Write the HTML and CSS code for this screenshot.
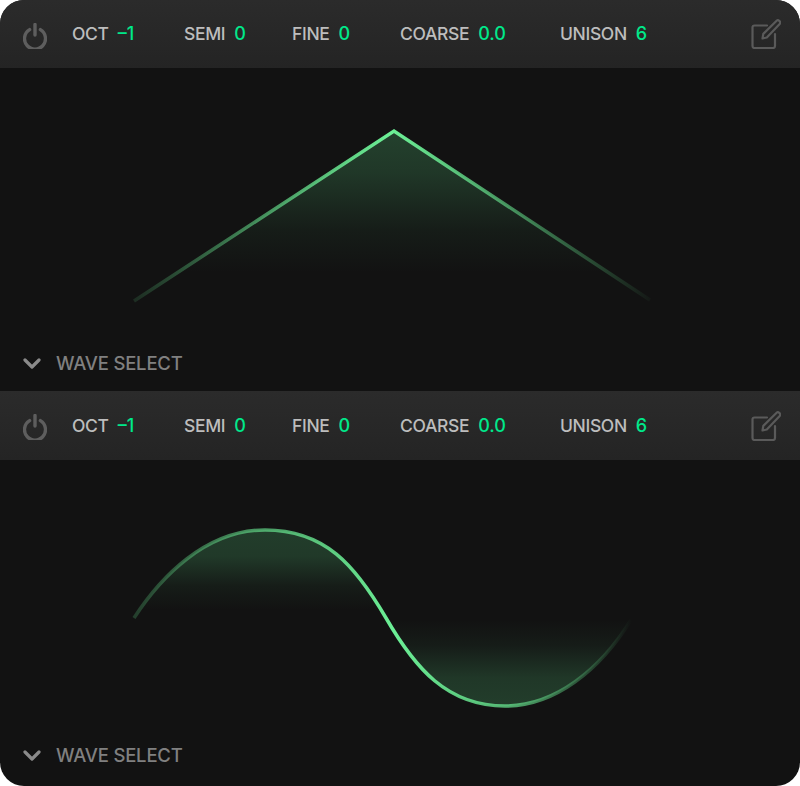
FILE: index.html
```html
<!DOCTYPE html>
<html lang="en">
<head>
    <meta charset="UTF-8">
    <title>Oscillators</title>
    <link rel="stylesheet" href="styles.css">
</head>
<body>
    <svg class="defs" width="0" height="0">
        <defs>
            <symbol id="icon-power" viewBox="0 0 24 26">
                <path d="M6.600 6.600a10.500 10.500 0 1 0 10.800 0M12 1.500V12" fill="none" stroke="currentColor" stroke-width="3.400" stroke-linecap="round"/>
            </symbol>
            <symbol id="icon-edit" viewBox="0 0 30 30">
                <path d="M16 6.500H3.500a2 2 0 0 0-2 2V27a2 2 0 0 0 2 2h18.500a2 2 0 0 0 2-2V15" fill="none" stroke="currentColor" stroke-width="2.200" stroke-linecap="round"/>
                <path d="M11.500 19.500l.8-4.600L25.600 1.800a1.800 1.800 0 0 1 2.500 0l.6.6a1.800 1.800 0 0 1 0 2.500L15.800 18.500z" fill="none" stroke="currentColor" stroke-width="2.200" stroke-linejoin="round"/>
            </symbol>
            <symbol id="icon-chevron" viewBox="0 0 18 11">
                <path d="M2 2l7 7 7-7" fill="none" stroke="currentColor" stroke-width="3.200" stroke-linecap="round" stroke-linejoin="round"/>
            </symbol>
            <linearGradient id="tri-line" gradientUnits="userSpaceOnUse" x1="134" y1="0" x2="650" y2="0">
                <stop offset="0" stop-color="#6cf096" stop-opacity="0.12"/>
                <stop offset="0.5" stop-color="#6cf096"/>
                <stop offset="1" stop-color="#6cf096" stop-opacity="0.03"/>
            </linearGradient>
            <linearGradient id="tri-fill" gradientUnits="userSpaceOnUse" x1="0" y1="63" x2="0" y2="205">
                <stop offset="0" stop-color="#5fe08a" stop-opacity="0.23"/>
                <stop offset="0.3" stop-color="#5fe08a" stop-opacity="0.18"/>
                <stop offset="0.7" stop-color="#5fe08a" stop-opacity="0.05"/>
                <stop offset="1" stop-color="#5fe08a" stop-opacity="0"/>
            </linearGradient>
            <linearGradient id="sine-line" gradientUnits="userSpaceOnUse" x1="134" y1="0" x2="632" y2="0">
                <stop offset="0" stop-color="#6cf096" stop-opacity="0.2"/>
                <stop offset="0.25" stop-color="#6cf096" stop-opacity="0.6"/>
                <stop offset="0.52" stop-color="#6cf096"/>
                <stop offset="0.75" stop-color="#6cf096" stop-opacity="0.7"/>
                <stop offset="1" stop-color="#6cf096" stop-opacity="0"/>
            </linearGradient>
            <linearGradient id="sine-top" gradientUnits="userSpaceOnUse" x1="0" y1="70" x2="0" y2="150">
                <stop offset="0" stop-color="#5fe08a" stop-opacity="0.21"/>
                <stop offset="0.33" stop-color="#5fe08a" stop-opacity="0.19"/>
                <stop offset="0.7" stop-color="#5fe08a" stop-opacity="0.05"/>
                <stop offset="1" stop-color="#5fe08a" stop-opacity="0"/>
            </linearGradient>
            <linearGradient id="sine-bottom" gradientUnits="userSpaceOnUse" x1="0" y1="246" x2="0" y2="160">
                <stop offset="0" stop-color="#5fe08a" stop-opacity="0.21"/>
                <stop offset="0.33" stop-color="#5fe08a" stop-opacity="0.18"/>
                <stop offset="0.7" stop-color="#5fe08a" stop-opacity="0.05"/>
                <stop offset="1" stop-color="#5fe08a" stop-opacity="0"/>
            </linearGradient>
        </defs>
    </svg>

    <div class="synth">
        <section class="osc osc-first">
            <header class="osc-head">
                <svg class="icon-power"><use href="#icon-power"/></svg>
                <div class="params">
                    <div class="param param-oct"><span class="param-name">OCT</span><span class="param-value">–1</span></div>
                    <div class="param param-semi"><span class="param-name">SEMI</span><span class="param-value">0</span></div>
                    <div class="param param-fine"><span class="param-name">FINE</span><span class="param-value">0</span></div>
                    <div class="param param-coarse"><span class="param-name">COARSE</span><span class="param-value">0.0</span></div>
                    <div class="param"><span class="param-name">UNISON</span><span class="param-value">6</span></div>
                </div>
                <svg class="icon-edit"><use href="#icon-edit"/></svg>
            </header>
            <svg class="wave" viewBox="0 0 800 270">
                <path d="M134 233L394 63L650 232Z" fill="url(#tri-fill)"/>
                <path d="M134 233L394 63L650 232" fill="none" stroke="url(#tri-line)" stroke-width="3.500"/>
            </svg>
            <footer class="osc-foot">
                <svg class="icon-chevron"><use href="#icon-chevron"/></svg>
                <span class="wave-select">WAVE SELECT</span>
            </footer>
        </section>

        <section class="osc osc-second">
            <header class="osc-head">
                <svg class="icon-power"><use href="#icon-power"/></svg>
                <div class="params">
                    <div class="param param-oct"><span class="param-name">OCT</span><span class="param-value">–1</span></div>
                    <div class="param param-semi"><span class="param-name">SEMI</span><span class="param-value">0</span></div>
                    <div class="param param-fine"><span class="param-name">FINE</span><span class="param-value">0</span></div>
                    <div class="param param-coarse"><span class="param-name">COARSE</span><span class="param-value">0.0</span></div>
                    <div class="param"><span class="param-name">UNISON</span><span class="param-value">6</span></div>
                </div>
                <svg class="icon-edit"><use href="#icon-edit"/></svg>
            </header>
            <svg class="wave" viewBox="0 0 800 270">
                <path d="M134 158C160 118 205 70 265 70C325 70 355 105 386 158Z" fill="url(#sine-top)"/>
                <path d="M386 158C415 208 447 246 505 246C555 246 600 210 631 160Z" fill="url(#sine-bottom)"/>
                <path d="M134 158C160 118 205 70 265 70C325 70 355 105 386 158C415 208 447 246 505 246C555 246 600 210 631 160" fill="none" stroke="url(#sine-line)" stroke-width="3.500"/>
            </svg>
            <footer class="osc-foot">
                <svg class="icon-chevron"><use href="#icon-chevron"/></svg>
                <span class="wave-select">WAVE SELECT</span>
            </footer>
        </section>
    </div>
</body>
</html>
```
FILE: styles.css
```css
html, body {
    margin: 0;
    padding: 0;
    background-color: #fff;
}
.defs {
    display: block;
    height: 0;
}
.synth {
    width: 800px;
    height: 786px;
    background-color: #121212;
    border-radius: 24px;
    overflow: hidden;
    font-family: "Inter", "Liberation Sans", sans-serif;
}
.osc-first {
    margin-bottom: 3px;
}
.osc-head {
    display: flex;
    align-items: center;
    height: 68px;
    padding: 0 19px 0 23px;
    background: linear-gradient(#2b2b2b, #242424);
}
.osc-second .osc-head {
    height: 69px;
}
.icon-power {
    width: 24px;
    height: 26px;
    margin-top: 3px;
    color: #5e5e5e;
}
.params {
    display: flex;
    flex: 1;
    margin-left: 25px;
    font-size: 17.500px;
    line-height: 24px;
    font-weight: 500;
    letter-spacing: -0.35px;
}
.param {
    display: flex;
    gap: 9px;
}
.param-oct {
    width: 112px;
}
.param-semi {
    width: 108px;
}
.param-fine {
    width: 108px;
}
.param-coarse {
    width: 160px;
}
.param-name {
    color: #bdbdbd;
}
.param-value {
    font-size: 18px;
    letter-spacing: 0;
    color: #00e88a;
}
.icon-edit {
    width: 30px;
    height: 30px;
    color: #5a5a5a;
}
.wave {
    display: block;
    width: 800px;
    height: 270px;
}
.osc-foot {
    display: flex;
    align-items: center;
    height: 50px;
    padding-left: 23px;
}
.icon-chevron {
    width: 18px;
    height: 11px;
    color: #8a8a8a;
}
.wave-select {
    margin-left: 15px;
    font-size: 18.500px;
    font-weight: 500;
    letter-spacing: -0.2px;
    color: #808080;
}
```
